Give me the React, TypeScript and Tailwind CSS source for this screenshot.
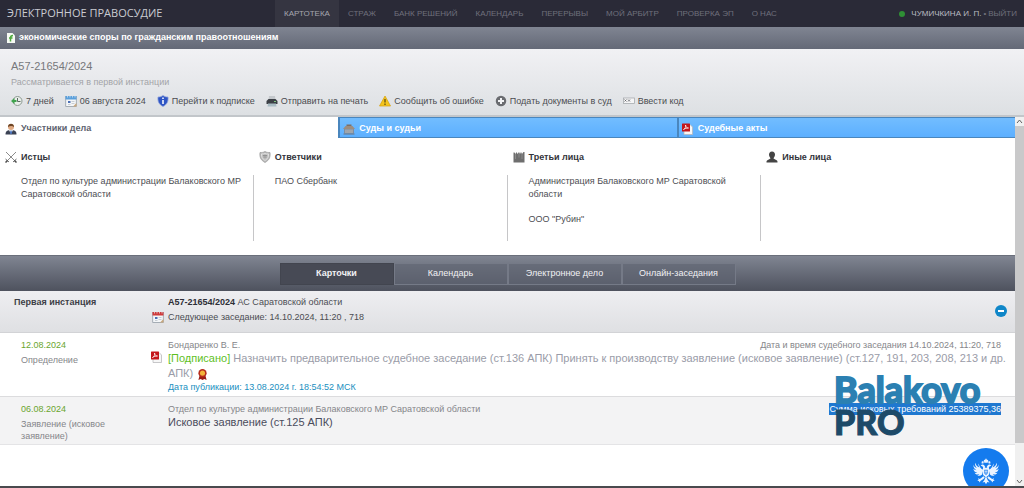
import { useState } from "react";
import type { ReactNode } from "react";
import clsx from "clsx";

const NAV = [
  "КАРТОТЕКА",
  "СТРАЖ",
  "БАНК РЕШЕНИЙ",
  "КАЛЕНДАРЬ",
  "ПЕРЕРЫВЫ",
  "МОЙ АРБИТР",
  "ПРОВЕРКА ЭП",
  "О НАС",
];

const VIEWS = ["Карточки", "Календарь", "Электронное дело", "Онлайн-заседания"];

function Icon({ children, className }: { children: ReactNode; className?: string }) {
  return (
    <svg viewBox="0 0 24 24" className={clsx("shrink-0", className || "size-3")} fill="none" aria-hidden="true">
      {children}
    </svg>
  );
}

function HistoryIcon() {
  return (
    <Icon>
      <circle cx="13" cy="12" r="9" fill="#e9eeea" stroke="#8d9a92" strokeWidth="2" />
      <path d="M13 6v7h6" stroke="#5c6b62" strokeWidth="2" />
      <path d="M0 12l7-6v4h4v4H7v4z" fill="#3fa34d" />
    </Icon>
  );
}

function CalendarIcon({ top }: { top: string }) {
  return (
    <Icon>
      <rect x="1.500" y="3" width="21" height="20" fill="#f4f6f8" stroke="#8e98a3" strokeWidth="1.500" />
      <path d="M1 2h22v7H1z" fill={top} />
      <path d="M5 1v4M10 1v4M15 1v4M20 1v4" stroke="#dfe6ee" strokeWidth="1.500" />
      <path d="M6 12h5v4H6z" fill="#4b6fb5" />
      <path d="M13 13h6M13 17h6M6 19h5" stroke="#b9c0c8" strokeWidth="1.500" />
      <path d="M16 23l7-7v7z" fill="#c9a77c" />
    </Icon>
  );
}

function ShieldInfoIcon() {
  return (
    <Icon>
      <path d="M12 1c3 2 6 3 10 3 1 9-2 15-10 19C4 19 1 13 2 4c4 0 7-1 10-3z" fill="#2f55c4" stroke="#8ea2dc" strokeWidth="1.500" />
      <path d="M12 5v3M12 10v8" stroke="#fff" strokeWidth="3" />
    </Icon>
  );
}

function PrinterIcon() {
  return (
    <Icon>
      <path d="M6 2h12l1 8H5z" fill="#c4c8cc" />
      <path d="M1 12l4-4h14l4 4v6H1z" fill="#3c4046" />
      <path d="M4 17h16l1 6H3z" fill="#a9bcc4" />
      <path d="M16 13h4" stroke="#7bc07e" strokeWidth="2" />
    </Icon>
  );
}

function WarningIcon() {
  return (
    <Icon>
      <path d="M12 2l11 20H1z" fill="#f4c51c" stroke="#d6a312" strokeWidth="1.500" strokeLinejoin="round" />
      <path d="M12 8v7M12 17v3" stroke="#5b4a12" strokeWidth="2.500" />
    </Icon>
  );
}

function PlusIcon() {
  return (
    <Icon>
      <circle cx="12" cy="12" r="10.500" fill="#6a6c70" />
      <path d="M12 6v12M6 12h12" stroke="#f1f2f4" strokeWidth="4" />
    </Icon>
  );
}

function CodeIcon() {
  return (
    <Icon>
      <rect x="1" y="6" width="22" height="11" fill="#f5f5f6" stroke="#a3a6ab" strokeWidth="1.500" />
      <path d="M3 9l4 4M7 9l-4 4M10 9l4 4M14 9l-4 4" stroke="#55585e" strokeWidth="1.500" />
    </Icon>
  );
}

function DocIcon() {
  return (
    <svg viewBox="0 0 16 20" className="h-[10px] w-2 shrink-0" fill="none" aria-hidden="true">
      <path d="M0 0h11l5 5v15H0z" fill="#f6faf4" />
      <path d="M12 5c-4 0-5 2-5 5v7M4 10h7" stroke="#4faa3f" strokeWidth="3" />
    </svg>
  );
}

function PersonSuitIcon() {
  return (
    <Icon>
      <path d="M1 23c0-7 4-9 11-9s11 2 11 9z" fill="#3b4254" />
      <path d="M8 14l4 8 4-8z" fill="#f3f4f6" />
      <path d="M11 15h2l1 5-2 3-2-3z" fill="#3f6dbd" />
      <circle cx="12" cy="8" r="6" fill="#e0ab84" />
      <path d="M6 8c-1-9 13-9 12 0-3-3-8-3-12 0z" fill="#6d4526" />
    </Icon>
  );
}

function CourtIcon() {
  return (
    <Icon>
      <path d="M7 3h10v4H7z" fill="#7d6f66" />
      <path d="M0 12l5-6h14l5 6z" fill="#9c8d80" />
      <path d="M2 12h20v9H2z" fill="#7e8ea1" />
      <path d="M6 13v7M10 13v7M14 13v7M18 13v7" stroke="#d8cdbf" strokeWidth="1.500" />
      <path d="M1 22h22" stroke="#6a7482" strokeWidth="2" />
    </Icon>
  );
}

function PdfIcon() {
  return (
    <Icon>
      <path d="M4 3h12l5 5v15H4z" fill="#f7f7f7" stroke="#b5b5b8" strokeWidth="1.500" />
      <rect x="0" y="1" width="16" height="16" rx="1" fill="#c4161c" />
      <path d="M3 13c4-2 5-6 4-9 1 5 3 6 6 6-4 0-7 1-10 3z" stroke="#fff" strokeWidth="1.500" />
    </Icon>
  );
}

function SwordsIcon() {
  return (
    <Icon>
      <path d="M2 2l18 18M22 2L4 20" stroke="#8b8b8b" strokeWidth="2" />
      <path d="M1 16l7 6M23 16l-7 6" stroke="#6d6d6d" strokeWidth="2" />
      <path d="M1 23l4-4M23 23l-4-4" stroke="#4d4d4d" strokeWidth="3" />
    </Icon>
  );
}

function ShieldIcon() {
  return (
    <Icon>
      <path d="M12 1c3 2 6 2 10 2 1 9-1 15-10 20C3 18 1 12 2 3c4 0 7 0 10-2z" fill="#b9b9b9" stroke="#9c9c9c" strokeWidth="1.500" />
      <path d="M12 5c2 1 4 1 7 1 0 6-1 9-7 13-6-4-7-7-7-13 3 0 5 0 7-1z" stroke="#ececec" strokeWidth="1.500" />
      <path d="M8 9h8M9 12h6" stroke="#858585" strokeWidth="1.500" />
    </Icon>
  );
}

function WallIcon() {
  return (
    <Icon>
      <path d="M1 23V3h2l2 3 2-4 2 4 3-4 2 4 2-4 2 4 3-4h2v21z" fill="#6e6e6e" />
      <path d="M5 6v10M12 5v8M18 6v10" stroke="#a9a9a9" />
    </Icon>
  );
}

function PersonIcon() {
  return (
    <Icon>
      <path d="M12 1c4 0 6 3 6 6 0 4-2 5-3 8l7 4c1 1 1 2 1 4H1c0-2 0-3 1-4l7-4C8 12 6 11 6 7c0-3 2-6 6-6z" fill="#444" />
    </Icon>
  );
}

function RibbonIcon() {
  return (
    <Icon className="ml-1 inline h-[13px] w-[11px]">
      <path d="M6 13L3 24l5-2 4 2 4-2 5 2-3-11z" fill="#9c1c14" />
      <circle cx="12" cy="9" r="9" fill="#b52a1c" />
      <circle cx="12" cy="9" r="5.500" fill="#f2b53a" />
    </Icon>
  );
}

// one half of the two-headed eagle, the other half is mirrored
function EagleHalf() {
  return (
    <>
      <path d="M31 24c-2-3-2-6-6-7-2 0-4 1-5 3l3 1c2 0 2 3 3 5z" />
      <path d="M26 29C20 28 17 22 15 15c-1 3 0 6 2 9C12 22 9 18 7 13c-1 4 1 9 4 12-4-1-7-4-8-8 0 6 2 10 7 13-3 0-5-1-7-3 1 5 4 8 9 9-2 1-4 1-6 0 2 4 6 5 11 3-2 2-3 3-5 3 4 2 8 1 11-2z" />
      <path d="M26 44c-3 2-5 5-9 6l-3-2 1 4-3 2 4 1 1 3 3-4c4-1 7-4 9-7z" />
    </>
  );
}

function EagleIcon() {
  return (
    <svg viewBox="0 0 64 64" className="size-7" fill="#eaf3ff" aria-hidden="true">
      <path d="M32 3l2 3 3 1-1 6h-8l-1-6 3-1z" />
      <path d="M22 11l3-2 2 2-1 4h-4zM42 11l-3-2-2 2 1 4h4z" />
      <EagleHalf />
      <g transform="translate(64 0) scale(-1 1)">
        <EagleHalf />
      </g>
      <path d="M25 25h14v13c0 4-4 6-7 8-3-2-7-4-7-8z" />
      <path d="M32 44l4 9 4 5-5-1-3 5-3-5-5 1 4-5z" />
      <path d="M28 29h8v7c0 2-2 4-4 5-2-1-4-3-4-5z" fill="#2f86ee" />
      <path d="M31 30h2v8h-2zM29 33h6v1h-6z" />
    </svg>
  );
}

const ACTIONS = [
  { icon: <HistoryIcon />, label: "7 дней" },
  { icon: <CalendarIcon top="#5aa0dc" />, label: "06 августа 2024" },
  { icon: <ShieldInfoIcon />, label: "Перейти к подписке" },
  { icon: <PrinterIcon />, label: "Отправить на печать" },
  { icon: <WarningIcon />, label: "Сообщить об ошибке" },
  { icon: <PlusIcon />, label: "Подать документы в суд" },
  { icon: <CodeIcon />, label: "Ввести код" },
];

const TABS = [
  { icon: <PersonSuitIcon />, label: "Участники дела" },
  { icon: <CourtIcon />, label: "Суды и судьи" },
  { icon: <PdfIcon />, label: "Судебные акты" },
];

const PARTIES = [
  { icon: <SwordsIcon />, title: "Истцы", names: ["Отдел по культуре администрации Балаковского МР Саратовской области"] },
  { icon: <ShieldIcon />, title: "Ответчики", names: ["ПАО Сбербанк"] },
  { icon: <WallIcon />, title: "Третьи лица", names: ["Администрация Балаковского МР Саратовской области", 'ООО "Рубин"'] },
  { icon: <PersonIcon />, title: "Иные лица", names: [] },
];

function TopBar() {
  return (
    <header className="flex h-[27px] items-center bg-[#2a2a37] text-[8px] text-[#6f707c]">
      <a href="#" className="w-[275px] pl-[7px] font-['Open_Sans',sans-serif] text-[11px] text-[#c9cad1]">
        ЭЛЕКТРОННОЕ ПРАВОСУДИЕ
      </a>
      <nav className="flex h-full">
        {NAV.map((item, i) => (
          <a
            key={item}
            href="#"
            className={clsx("flex h-full items-center px-[9px] whitespace-nowrap", i === 0 && "bg-[#353541] text-[#a5a6ae]")}
          >
            {item}
          </a>
        ))}
      </nav>
      <div className="ml-auto flex items-center pr-[7px] whitespace-nowrap">
        <span className="mr-[6px] size-[6px] rounded-full bg-[#2f8f35]" />
        <a href="#" className="text-[#b9bac1]">ЧУМИЧКИНА И. П.</a>
        <span className="mx-[2px]">•</span>
        <a href="#">ВЫЙТИ</a>
      </div>
    </header>
  );
}

function CaseHeader() {
  return (
    <>
      <div className="flex h-[22px] items-center gap-1 bg-linear-to-b from-[#808592] to-[#646977] pl-[7px] text-[9px] font-bold text-white">
        <DocIcon />
        экономические споры по гражданским правоотношениям
      </div>
      <section className="h-[68px] border-b-2 border-[#c2c6ca] bg-linear-to-b from-[#f1f1f4] to-[#dde0e3] px-[11px] pt-[10px]">
        <h1 className="text-[11px] leading-[14px] text-[#77787c]">А57-21654/2024</h1>
        <p className="mt-[3px] text-[9px] leading-3 text-[#a3a4a8]">Рассматривается в первой инстанции</p>
        <div className="mt-[7px] flex gap-[11px]">
          {ACTIONS.map((action) => (
            <button key={action.label} type="button" className="flex items-center gap-[3px] text-[9px] leading-3 whitespace-nowrap text-[#4b4c50]">
              {action.icon}
              {action.label}
            </button>
          ))}
        </div>
      </section>
    </>
  );
}

function Participants() {
  const [active, setActive] = useState(0);
  return (
    <>
      <div role="tablist" className="grid h-[21px] grid-cols-3">
        {TABS.map((tab, i) => (
          <button
            key={tab.label}
            type="button"
            role="tab"
            aria-selected={active === i}
            onClick={() => setActive(i)}
            className={clsx(
              "flex items-center gap-1 pt-[2px] text-[9px] font-bold",
              active === i
                ? "bg-white pl-[5px] text-[#5d6370]"
                : "border-y border-l-2 border-[#4a86bd] bg-linear-to-b from-[#72bdff] to-[#5cafff] pl-[3px] text-white"
            )}
          >
            {tab.icon}
            {tab.label}
          </button>
        ))}
      </div>
      <div className="grid grid-cols-4 pt-[13px] pb-[14px]">
        {PARTIES.map((party, i) => (
          <section key={party.title} className="flex flex-col text-[9px]">
            <h2 className="flex items-center gap-1 pl-[5px] leading-3 font-bold text-[#33343b]">
              {party.icon}
              {party.title}
            </h2>
            <ul
              className={clsx(
                "mt-3 flex h-[66px] flex-col gap-3 pr-2 pl-[21px] leading-[13px] text-[#4c4d52]",
                i < PARTIES.length - 1 && "border-r border-[#c6c6c8]"
              )}
            >
              {party.names.map((name) => (
                <li key={name}>{name}</li>
              ))}
            </ul>
          </section>
        ))}
      </div>
    </>
  );
}

function ViewSwitch() {
  const [view, setView] = useState(VIEWS[0]);
  return (
    <div className="flex h-9 items-center justify-center border-t border-[#6a6f7b] bg-linear-to-b from-[#808592] to-[#4e525e]">
      <div className="grid w-[456px] grid-cols-4">
        {VIEWS.map((item) => (
          <button
            key={item}
            type="button"
            onClick={() => setView(item)}
            className={clsx(
              "h-[22px] border text-[9px] text-[#f1f1f4]",
              view === item ? "border-[#42454f] bg-[#474a55] font-bold" : "border-[#757a87] bg-[#5f6471]/60"
            )}
          >
            {item}
          </button>
        ))}
      </div>
    </div>
  );
}

function Timeline() {
  return (
    <div className="text-[9px]">
      <section className="flex min-h-[42px] border-b border-[#d2d3d6] bg-linear-to-b from-[#eeeef1] to-[#dfe0e3] pt-[5px] text-[#4b4c52]">
        <h2 className="w-[152px] pl-[14px] leading-3 font-bold text-[#3d3e46]">Первая инстанция</h2>
        <div className="flex-1">
          <p className="pl-4 leading-3">
            <b className="text-[#2d2e36]">А57-21654/2024</b> АС Саратовской области
          </p>
          <p className="mt-[3px] flex items-center gap-1 leading-3">
            <CalendarIcon top="#cf3a3a" />
            Следующее заседание: 14.10.2024, 11:20 , 718
          </p>
        </div>
        <button type="button" aria-label="Свернуть" className="mt-[9px] mr-2 flex size-3 items-center justify-center rounded-full bg-[#0f86c8]">
          <span className="h-[2px] w-[6px] bg-white" />
        </button>
      </section>

      <article className="flex min-h-[64px] border-b border-[#dcdcde] bg-white pt-[6px] text-[#85868a]">
        <div className="w-[151px] pl-[21px]">
          <time className="block leading-3 text-[#6aa52f]">12.08.2024</time>
          <p className="mt-[3px] leading-3">Определение</p>
        </div>
        <div className="flex-1">
          <div className="flex justify-between pr-[14px] pl-[17px] leading-3">
            <span>Бондаренко В. Е.</span>
            <span>Дата и время судебного заседания 14.10.2024, 11:20, 718</span>
          </div>
          <div className="flex gap-[5px] pr-1 text-[11px] leading-[15px]">
            <PdfIcon />
            <a href="#" className="text-[#9a9ca8]">
              <span className="text-[#5fbf1f]">[Подписано]</span> Назначить предварительное судебное заседание (ст.136 АПК)
              Принять к производству заявление (исковое заявление) (ст.127, 191, 203, 208, 213 и др. АПК)
              <RibbonIcon />
            </a>
          </div>
          <p className="pl-[17px] leading-3 text-[#1a8fc0]">Дата публикации: 13.08.2024 г. 18:54:52 МСК</p>
        </div>
      </article>

      <article className="flex min-h-[48px] border-b border-[#e4e4e6] bg-[#f3f3f4] pt-[6px] text-[#85868a]">
        <div className="w-[168px] pr-[50px] pl-[21px]">
          <time className="block leading-3 text-[#6aa52f]">06.08.2024</time>
          <p className="mt-[3px] leading-3">Заявление (исковое заявление)</p>
        </div>
        <div className="relative flex-1 pr-[14px]">
          <div className="flex justify-between leading-3">
            <span>Отдел по культуре администрации Балаковского МР Саратовской области</span>
            <span className="bg-[#1f78d0] text-white">Сумма исковых требований 25389375,36</span>
          </div>
          <a href="#" className="text-[11px] leading-[15px] text-[#4a4c5c]">Исковое заявление (ст.125 АПК)</a>
          <Watermark />
        </div>
      </article>
    </div>
  );
}

function Watermark() {
  return (
    <div className="absolute right-[33px] bottom-2 w-[148px] font-[Lato,sans-serif] whitespace-nowrap">
      <p className="text-[36px] leading-[36px] font-bold text-[#2b80b2] [-webkit-text-stroke:2px_#2b80b2]">Balakovo</p>
      <p className="text-[34px] leading-[29px] font-black text-[#1d4a68] [-webkit-text-stroke:1px_#1d4a68]">PRO</p>
    </div>
  );
}

function Scrollbar() {
  return (
    <div className="flex w-[9px] shrink-0 flex-col items-center bg-[#f0f0f0]" aria-hidden="true">
      <svg viewBox="0 0 9 9" className="size-[9px]" fill="none" stroke="#606060">
        <path d="M2 6l2.500-3L7 6" />
      </svg>
      <div className="w-full flex-[316] bg-[#c9c9ca]" />
      <div className="flex-[34]" />
      <svg viewBox="0 0 9 9" className="size-[9px]" fill="none" stroke="#606060">
        <path d="M2 3l2.500 3L7 3" />
      </svg>
    </div>
  );
}

export default function App() {
  return (
    <div className="flex min-h-screen flex-col border-b-2 border-[#4a4a4e] bg-white font-['Liberation_Sans',Arial,sans-serif]">
      <TopBar />
      <CaseHeader />
      <div className="flex flex-1">
        <main className="relative flex-1 overflow-hidden">
          <Participants />
          <ViewSwitch />
          <Timeline />
          <button
            type="button"
            aria-label="Помощник"
            className="absolute right-[6px] -bottom-[8px] flex size-[46px] items-center justify-center rounded-full bg-[#147bee]"
          >
            <EagleIcon />
          </button>
        </main>
        <Scrollbar />
      </div>
    </div>
  );
}
